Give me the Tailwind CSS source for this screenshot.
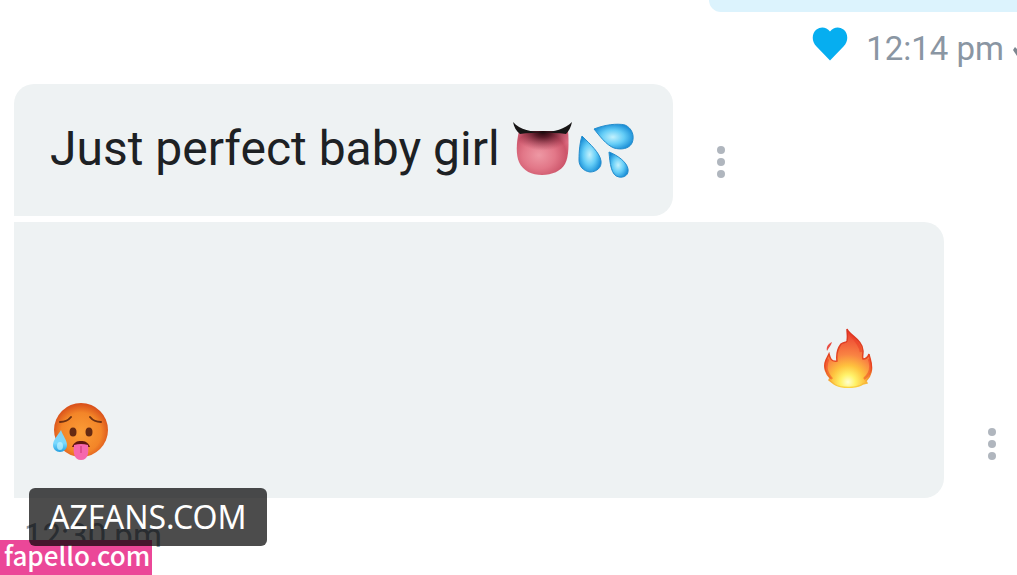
<!DOCTYPE html>
<html lang="en">
<head>
<meta charset="utf-8">
<meta name="viewport" content="width=device-width, initial-scale=1">
<title>Chat</title>
<script src="https://cdn.jsdelivr.net/npm/@tailwindcss/browser@4"></script>
</head>
<body class="bg-white font-['Roboto',sans-serif]">
<main class="relative flex min-h-screen flex-col overflow-hidden">
  <!-- End of the outgoing message and its status -->
  <section class="flex flex-col items-end">
    <div class="h-3 w-[308px] rounded-bl-2xl bg-[#dcf3fd]"></div>
    <div class="flex h-[72px] items-center overflow-hidden pt-0.5">
      <svg class="mr-[18px] mb-2.5 h-[34px] w-9 shrink-0" viewBox="0 0 36 34" fill="#06aef0" aria-label="Liked" role="img"><path d="M18 33.500 4.500 19.500C-1 14 0 6 4.500 2.500c4.500-3.500 10-2.500 13.500 2 3.500-4.500 9-5.500 13.500-2C36 6 37 14 31.500 19.500z"/></svg>
      <time class="text-[33px] leading-10 whitespace-nowrap text-[#8a96a3]">12:14 pm</time>
      <svg class="ml-[9px] h-6 w-1 shrink-0" viewBox="0 0 4 24" fill="#7c8690" aria-hidden="true"><path d="M0 13 2 10l2 2v7z"/></svg>
    </div>
  </section>

  <section class="flex flex-col gap-1.5 pl-3.5">
    <article class="flex items-center gap-[38px]">
      <div class="flex h-[132px] items-center rounded-[20px] rounded-bl-none bg-[#eef2f3] pr-[39px] pl-9">
        <p class="pb-0.5 text-[48px] leading-[56px] whitespace-nowrap text-[#1d2124]">Just perfect baby girl</p>
        <svg class="mb-0.5 ml-3 h-14 w-[61px] shrink-0" viewBox="0 0 61 56" role="img" aria-label="Tongue">
          <defs>
            <radialGradient id="tongue" cx=".43" cy=".55" r=".62"><stop offset="0" stop-color="#ee98a4"/><stop offset=".5" stop-color="#e27788"/><stop offset=".85" stop-color="#cd566b"/><stop offset="1" stop-color="#dd6a80"/></radialGradient>
            <radialGradient id="shade" gradientUnits="userSpaceOnUse" cx="31" cy="12" r="29" gradientTransform="translate(0 3) scale(1 .65)"><stop offset="0" stop-color="#1a0508"/><stop offset=".3" stop-color="#3c0a16" stop-opacity=".8"/><stop offset="1" stop-color="#8d2940" stop-opacity="0"/></radialGradient>
          </defs>
          <path d="M7 10C4 23 4 34 7 41c4 9 13 13 23 13s19-4 23-11c4-7 4-22 3-33z" fill="url(#tongue)"/>
          <path d="M7 10C4 23 4 34 7 41c4 9 13 13 23 13s19-4 23-11c4-7 4-22 3-33z" fill="url(#shade)"/>
          <path d="M1 1C8 9 20 11 31 11S53 8 60 1c-1 5-3 9-6 12-15-2-31-2-46 0C4 10 2 6 1 1z" fill="#171515"/>
        </svg>
        <svg class="ml-[5px] h-14 w-[56px] shrink-0" viewBox="0 0 56 56" role="img" aria-label="Sweat droplets">
          <defs><radialGradient id="drop" cx=".48" cy=".52" r=".58"><stop offset="0" stop-color="#c2f1fd"/><stop offset=".5" stop-color="#64cdf7"/><stop offset="1" stop-color="#1187d3"/></radialGradient></defs>
          <g fill="url(#drop)" stroke="#258dcc" stroke-width="1">
            <path d="M16 7C26 3 39 1 47 3c7 3 10 11 7 18-3 6-11 7-18 5C28 23 21 13 16 7z"/>
            <path d="M4 14C12 22 22 31 23 39c1 7-5 11-11 11C5 49 1 44 1 38c0-9 1-18 3-24z"/>
            <path d="M31 30c8 3 18 10 19 17 1 6-4 9-9 8-8-1-9-14-10-25z"/>
          </g>
        </svg>
      </div>
      <button type="button" aria-label="Message options" class="mt-6 flex w-5 cursor-pointer flex-col items-center gap-1">
        <span class="size-2 rounded-full bg-[#b0b6be]"></span><span class="size-2 rounded-full bg-[#b0b6be]"></span><span class="size-2 rounded-full bg-[#b0b6be]"></span>
      </button>
    </article>

    <article class="flex pr-[15px]">
      <div class="flex h-[276px] min-w-0 flex-1 flex-col justify-end rounded-r-[20px] bg-[#eef2f3] pr-[71px] pb-[37px] pl-[38px]">
        <svg class="mb-3.5 h-[60px] w-[49px] self-end" viewBox="0 0 49 60" role="img" aria-label="Fire">
          <defs><radialGradient id="fire" gradientUnits="userSpaceOnUse" cx="24" cy="54" r="46"><stop offset="0" stop-color="#fffed0"/><stop offset=".16" stop-color="#fff36a"/><stop offset=".36" stop-color="#fec23e"/><stop offset=".6" stop-color="#f98343"/><stop offset="1" stop-color="#ed4b35"/></radialGradient>
          <linearGradient id="edge" x2="0" y2="1"><stop stop-color="#d93624"/><stop offset=".65" stop-color="#e84b20"/><stop offset="1" stop-color="#fbd441"/></linearGradient></defs>
          <path d="M23 1c2 6 16 11 16 22 0 4-1 6 0 8 3 0 5-2 6-5 1 6 4 11 2 18-1 5-3 7-5 9l1 2-4 1c-5 4-22 5-29 0l-5-4 1-2C2 46-1 39 2 32l3-6c1 4 2 8 8 7-1-8 1-13 4-17 3-2 5-1 6-3 1-4 0-8 0-12z" fill="url(#fire)" stroke="url(#edge)" stroke-width="1.500"/>
          <path d="M4 31c-3 8-2 13 4 20M45 31c3 8 1 15-5 20M24 4c5 6 12 11 13 20" fill="none" stroke="#e9361f" stroke-width="2.500" opacity=".45"/>
          <path d="M8 14c-1 4-3 5-5 9-1-4 1-7 5-9z" fill="#e94e43"/>
        </svg>
        <svg class="h-[59px] w-[58px]" viewBox="0 0 58 59" role="img" aria-label="Hot face">
          <defs>
            <radialGradient id="face" cx=".5" cy=".55" r=".53"><stop offset="0" stop-color="#fb9d37"/><stop offset=".7" stop-color="#f38528"/><stop offset="1" stop-color="#da521b"/></radialGradient>
            <linearGradient id="sweat" x2="0" y2="1"><stop stop-color="#8bd0ec"/><stop offset=".6" stop-color="#79d9ff"/><stop offset="1" stop-color="#229fe0"/></linearGradient>
          </defs>
          <circle cx="29" cy="28" r="27" fill="url(#face)"/>
          <path d="M8 20q7 0 11-5M38 15q4 5 11 5" fill="none" stroke="#6d3011" stroke-width="2" stroke-linecap="round"/>
          <ellipse cx="21" cy="30" rx="3.500" ry="4.500" fill="#652a12"/><ellipse cx="37" cy="30" rx="3.500" ry="4.500" fill="#652a12"/>
          <path d="M20 45c2-5 5-6 9-6s7 1 9 6z" fill="#60150f"/>
          <path d="M22 43q7-2 14 0c1 8 0 15-7 15s-8-7-7-15z" fill="#f667ad"/>
          <path d="M29 44v7" stroke="#d94687" stroke-width="1.500"/>
          <path d="M9 28c2 6 6 10 6 15 0 4-3 7-7 7s-7-3-7-7c0-5 5-10 8-15z" fill="url(#sweat)"/>
          <ellipse cx="8" cy="44" rx="3" ry="4" fill="#c3f3ff" opacity=".7"/>
        </svg>
      </div>
      <button type="button" aria-label="Message options" class="mb-[38px] ml-[38px] flex w-5 shrink-0 cursor-pointer flex-col items-center gap-1 self-end">
        <span class="size-2 rounded-full bg-[#b0b6be]"></span><span class="size-2 rounded-full bg-[#b0b6be]"></span><span class="size-2 rounded-full bg-[#b0b6be]"></span>
      </button>
    </article>
    <time class="mt-3 ml-2.5 text-[33px] leading-10 text-[#8a96a3]">12:30 pm</time>
  </section>

  <!-- Site labels over the conversation -->
  <div class="absolute bottom-0 left-0 flex h-[35px] items-center bg-[#eb4798] pr-0.5 pb-1.5 pl-1 font-['Noto_Sans_CJK_SC',sans-serif] text-[26px] leading-8 font-medium text-white">fapello.com</div>
  <div class="absolute bottom-[29px] left-[29px] flex h-[58px] items-center rounded-md bg-black/70 px-5 font-['Noto_Sans',sans-serif] text-[32px] leading-9 text-white">AZFANS.COM</div>
</main>
</body>
</html>
